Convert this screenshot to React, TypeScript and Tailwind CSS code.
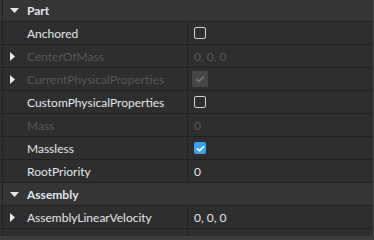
import React from 'react';

type Row = {
  name: string;
  value?: string;
  kind?: 'check' | 'text';
  checked?: boolean;
  disabled?: boolean;
  expandable?: boolean;
};

const partRows: Row[] = [
  { name: 'Anchored', kind: 'check' },
  { name: 'CenterOfMass', kind: 'text', value: '0, 0, 0', disabled: true, expandable: true },
  { name: 'CurrentPhysicalProperties', kind: 'check', checked: true, disabled: true, expandable: true },
  { name: 'CustomPhysicalProperties', kind: 'check' },
  { name: 'Mass', kind: 'text', value: '0', disabled: true },
  { name: 'Massless', kind: 'check', checked: true },
  { name: 'RootPriority', kind: 'text', value: '0' },
];

const assemblyRows: Row[] = [
  { name: 'AssemblyLinearVelocity', kind: 'text', value: '0, 0, 0', expandable: true },
  { name: 'AssemblyAngularVelocity', kind: 'text', value: '0, 0, 0', expandable: true },
];

const CheckBox = ({ checked, disabled }: { checked?: boolean; disabled?: boolean }) => {
  if (disabled) {
    return (
      <div className="w-[16px] h-[16px] -ml-[2px] bg-[#464646] flex items-center justify-center">
        <svg width="10" height="8" viewBox="0 0 10 8">
          <path d="M1 4 L4 6.5 L9 1.5" fill="none" stroke="#6e6e6e" strokeWidth="2" />
        </svg>
      </div>
    );
  }
  if (checked) {
    return (
      <div className="w-[12px] h-[12px] rounded-[2px] bg-[#35a3f5] flex items-center justify-center">
        <svg width="9" height="7" viewBox="0 0 10 8">
          <path d="M1 4 L4 6.5 L9 1.5" fill="none" stroke="#ffffff" strokeWidth="2" />
        </svg>
      </div>
    );
  }
  return <div className="w-[12px] h-[12px] rounded-[2px] border border-[#d0d0d0]" />;
};

const Arrow = ({ down }: { down?: boolean }) =>
  down ? (
    <svg width="9" height="5" viewBox="0 0 9 5">
      <path d="M0 0 L9 0 L4.5 5 Z" fill="#e8e8e8" />
    </svg>
  ) : (
    <svg width="5" height="9" viewBox="0 0 5 9">
      <path d="M0 0 L5 4.5 L0 9 Z" fill="#e8e8e8" />
    </svg>
  );

const PropRow = ({ row }: { row: Row }) => (
  <div className="flex h-[23px] border-b border-[#222222]">
    <div className="w-[3px] border-r border-[#222222]" />
    <div className="w-[185px] flex items-center border-r border-[#222222]">
      <div className="w-[24px] flex items-center pl-[7px]">{row.expandable && <Arrow />}</div>
      <span className={`pt-[2px] ${row.disabled ? 'text-[#575757]' : 'text-[#e3e6ea]'}`}>{row.name}</span>
    </div>
    <div className="flex-1 flex items-center pl-[6px]">
      {row.kind === 'check' ? (
        <CheckBox checked={row.checked} disabled={row.disabled} />
      ) : (
        <span className={`pt-[2px] ${row.disabled ? 'text-[#575757]' : 'text-[#e3e6ea]'}`}>{row.value}</span>
      )}
    </div>
  </div>
);

const Header = ({ title }: { title: string }) => (
  <div className="flex h-[23px] bg-[#353535] border-b border-[#222222]">
    <div className="w-[3px] border-r border-[#222222]" />
    <div className="w-[24px] flex items-center pl-[7px]">
      <Arrow down />
    </div>
    <span className="flex items-center pt-[2px] font-bold text-[#e3e6ea]">{title}</span>
  </div>
);

export default function App() {
  return (
    <div
      className="w-[374px] h-[240px] bg-[#2e2e2e] overflow-hidden flex flex-col text-[12px] leading-none"
      style={{ fontFamily: 'Lato, "Noto Sans", sans-serif' }}
    >
      <div className="flex-1 overflow-hidden -mt-[1px] border-r border-[#4a4a4a]">
        <Header title="Part" />
        {partRows.map((r) => (
          <PropRow key={r.name} row={r} />
        ))}
        <Header title="Assembly" />
        {assemblyRows.map((r) => (
          <PropRow key={r.name} row={r} />
        ))}
      </div>
      <div className="h-[4px] bg-[#3d3d3d]" />
    </div>
  );
}
